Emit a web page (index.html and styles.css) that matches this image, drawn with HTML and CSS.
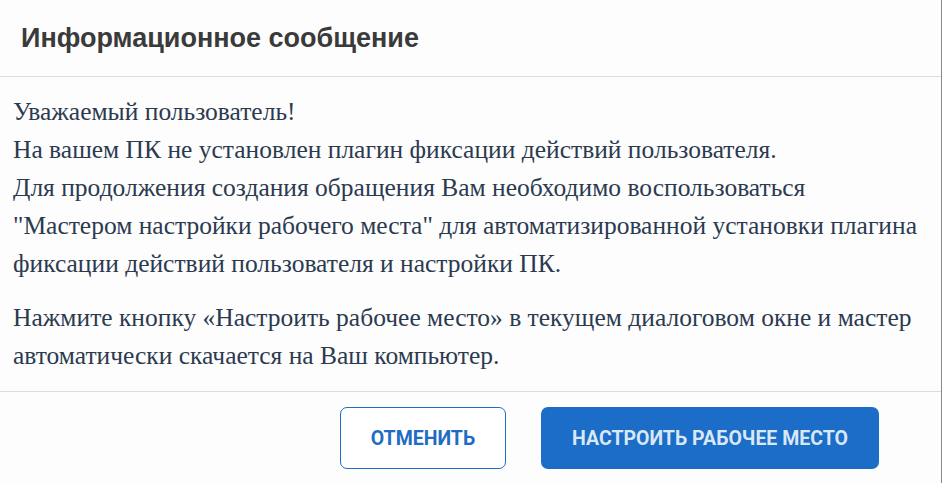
FILE: index.html
```
<!DOCTYPE html>
<html lang="ru">
<head>
    <meta charset="UTF-8">
    <meta name="viewport" content="width=device-width, initial-scale=1.0">
    <title>Информационное сообщение</title>
    <link rel="stylesheet" href="styles.css">
</head>
<body>
    <div class="dialog">
        <div class="dialog-header">
            <h2>Информационное сообщение</h2>
        </div>
        <div class="dialog-body">
            <p>Уважаемый пользователь!<br>
            На вашем ПК не установлен плагин фиксации действий пользователя.<br>
            Для продолжения создания обращения Вам необходимо воспользоваться<br>
            "Мастером настройки рабочего места" для автоматизированной установки плагина фиксации действий пользователя и настройки ПК.</p>
            <p>Нажмите кнопку «Настроить рабочее место» в текущем диалоговом окне и мастер автоматически скачается на Ваш компьютер.</p>
        </div>
        <div class="dialog-footer">
            <button type="button" class="cancel-button">Отменить</button>
            <button type="button" class="setup-button">Настроить рабочее место</button>
        </div>
    </div>
</body>
</html>
```
FILE: styles.css
```
body {
    margin: 0;
    background-color: #fdfdfd;
}
.dialog {
    width: 941px;
    height: 483px;
    border-right: 1px solid #8a8a8a;
    background-color: #fdfdfd;
}
.dialog-header {
    height: 76px;
    border-bottom: 1px solid #dcdcdc;
    display: flex;
    align-items: center;
    padding-left: 21px;
}
.dialog-header h2 {
    margin: 0;
    font-family: "Liberation Sans", Arial, sans-serif;
    font-size: 27px;
    font-weight: bold;
    color: #3a3a3a;
}
.dialog-body {
    padding: 16px 13px 16px 13px;
    border-bottom: 1px solid #dcdcdc;
    font-family: "Liberation Serif", "Times New Roman", serif;
    font-size: 25.5px;
    line-height: 38px;
    color: #2c3a50;
}
.dialog-body p {
    margin: 0;
}
.dialog-body p + p {
    margin-top: 16px;
}
.dialog-footer {
    display: flex;
    justify-content: flex-end;
    gap: 35px;
    padding: 15px 62px 0 0;
}
button {
    height: 62px;
    font-family: Roboto, "Liberation Sans", sans-serif;
    font-size: 19.5px;
    font-weight: bold;
    text-transform: uppercase;
    border-radius: 7px;
    cursor: pointer;
}
.cancel-button {
    width: 166px;
    background-color: #fff;
    color: #1f6cc3;
    border: 1px solid #1f6cc3;
}
.setup-button {
    width: 338px;
    background-color: #1b6dc8;
    color: #d9e7f6;
    border: none;
}
```
